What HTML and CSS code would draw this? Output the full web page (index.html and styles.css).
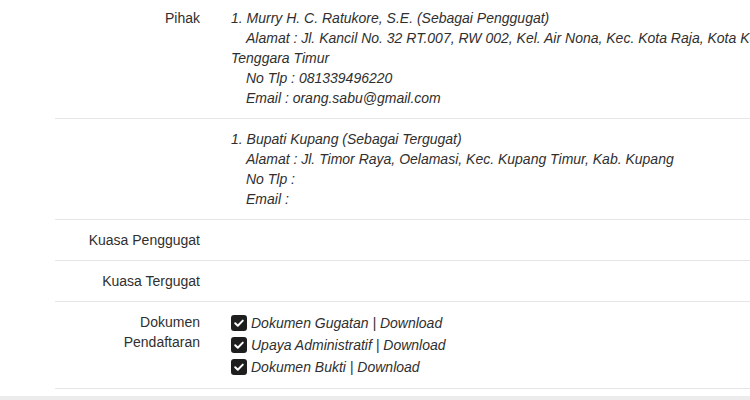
FILE: index.html
```html
<!DOCTYPE html>
<html>
<head>
<meta charset="utf-8">
<link rel="stylesheet" href="styles.css">
</head>
<body>
<div class="page">
  <div class="detail">
    <div class="row first">
      <div class="label">Pihak</div>
      <div class="value">
        <div class="line">1. Murry H. C. Ratukore, S.E. (Sebagai Penggugat)</div>
        <div class="line ind">Alamat : Jl. Kancil No. 32 RT.007, RW 002, Kel. Air Nona, Kec. Kota Raja, Kota Kupang, Nusa<br>Tenggara Timur</div>
        <div class="line ind">No Tlp : 081339496220</div>
        <div class="line ind">Email : orang.sabu@gmail.com</div>
      </div>
    </div>
    <div class="row">
      <div class="label"></div>
      <div class="value">
        <div class="line">1. Bupati Kupang (Sebagai Tergugat)</div>
        <div class="line ind">Alamat : Jl. Timor Raya, Oelamasi, Kec. Kupang Timur, Kab. Kupang</div>
        <div class="line ind">No Tlp :</div>
        <div class="line ind">Email :</div>
      </div>
    </div>
    <div class="row">
      <div class="label">Kuasa Penggugat</div>
      <div class="value"></div>
    </div>
    <div class="row">
      <div class="label">Kuasa Tergugat</div>
      <div class="value"></div>
    </div>
    <div class="row">
      <div class="label">Dokumen<br>Pendaftaran</div>
      <div class="value">
        <div class="doc"><span class="check"><svg viewBox="0 0 16 16" width="16" height="16"><rect x="0" y="0" width="16" height="16" rx="3" fill="#1e1e1e"/><path d="M4.2 8.3 L6.8 10.8 L11.8 5.6" stroke="#fff" stroke-width="2" fill="none" stroke-linecap="round" stroke-linejoin="round"/></svg></span><span class="doc-text">Dokumen Gugatan | Download</span></div>
        <div class="doc"><span class="check"><svg viewBox="0 0 16 16" width="16" height="16"><rect x="0" y="0" width="16" height="16" rx="3" fill="#1e1e1e"/><path d="M4.2 8.3 L6.8 10.8 L11.8 5.6" stroke="#fff" stroke-width="2" fill="none" stroke-linecap="round" stroke-linejoin="round"/></svg></span><span class="doc-text">Upaya Administratif | Download</span></div>
        <div class="doc"><span class="check"><svg viewBox="0 0 16 16" width="16" height="16"><rect x="0" y="0" width="16" height="16" rx="3" fill="#1e1e1e"/><path d="M4.2 8.3 L6.8 10.8 L11.8 5.6" stroke="#fff" stroke-width="2" fill="none" stroke-linecap="round" stroke-linejoin="round"/></svg></span><span class="doc-text">Dokumen Bukti | Download</span></div>
      </div>
    </div>
  </div>
  <div class="footer-bar"></div>
</div>
</body>
</html>
```
FILE: styles.css
```css
html, body {
  margin: 0;
  padding: 0;
  overflow: hidden;
  background: #fff;
}
body {
  font-family: "Liberation Sans", Arial, sans-serif;
  font-size: 14px;
  color: #2f2f2f;
  width: 750px;
  height: 400px;
}
.page {
  width: 1000px;
}
.detail {
  margin-top: -2px;
  margin-left: 55px;
  width: 945px;
}
.row {
  display: flex;
  border-bottom: 1px solid #e6e6e6;
  padding: 10px 0;
}
.label {
  width: 145px;
  padding-right: 31px;
  text-align: right;
  line-height: 20px;
  min-height: 20px;
  flex: none;
}
.value {
  flex: 1;
  font-style: italic;
  line-height: 20px;
}
.line.ind {
  text-indent: 15px;
}
.doc {
  display: flex;
  align-items: center;
  height: 22px;
}
.check {
  display: inline-flex;
  width: 16px;
  height: 16px;
  margin-right: 4px;
}
.footer-bar {
  height: 5px;
  background: #ececec;
  margin-top: 7px;
}
```
